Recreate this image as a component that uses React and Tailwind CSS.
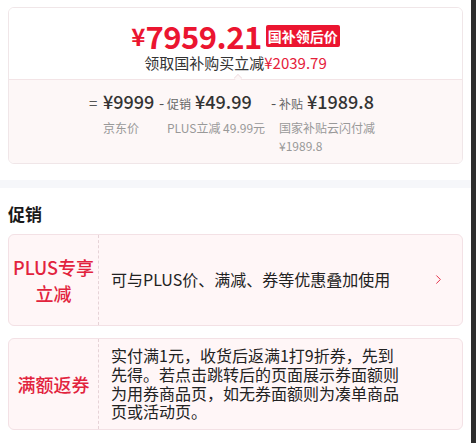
import React from 'react';
import { ChevronRight } from 'lucide-react';

const font = { fontFamily: '"Noto Sans CJK SC", "Noto Sans", sans-serif' };

const PriceCol = ({ sign, tag, amount, label, width, indent }) => (
  <div className={`flex shrink-0 flex-col ${width}`}>
    <div className="flex items-baseline whitespace-nowrap text-[#333]">
      <span className={`${indent} text-[15px] text-[#555]`}>{sign}</span>
      {tag && <span className="mr-[4px] text-[12px] text-[#666]">{tag}</span>}
      <span className="text-[18px] font-medium leading-[26px]">{amount}</span>
    </div>
    <div className={`${indent === 'w-[14px]' ? 'pl-[14px]' : 'pl-[8px]'} pt-[4px] text-[12px] leading-[18px] text-[#999]`}>{label}</div>
  </div>
);

const PromoCard = ({ title, children, arrow }) => (
  <div className="flex h-[92px] rounded-[6px] border border-[#f3e1e5] bg-[#fff6f7]">
    <div className="flex w-[90px] shrink-0 items-center justify-center whitespace-nowrap border-r border-dashed border-[#e6d3d7] text-center text-[18px] font-medium leading-[26px] text-[#e2233d]">
      {title}
    </div>
    <div className="flex flex-1 items-center pl-[12px] pr-[16px]">
      <div className="w-[292px] text-[16px] leading-[18.7px] text-[#222]">{children}</div>
      {arrow && <ChevronRight size={15} strokeWidth={1.5} className="ml-auto text-[#e2233d]" />}
    </div>
  </div>
);

export default function App() {
  return (
    <div className="flex h-[443px] w-[476px] overflow-hidden bg-white" style={font}>
      <div className="w-[471px]">
        <div className="px-[8px] pt-[7px]">
          <div className="overflow-hidden rounded-[6px] border border-[#f0e6e8]">
            <div className="relative flex h-[72px] flex-col items-center border-b border-[#f3e4e6] bg-white pt-[11px]">
              <div className="flex h-[34px] items-center">
                <span className="text-[24px] font-bold leading-[34px] text-[#eb1530]">¥</span>
                <span className="text-[31px] font-bold leading-[34px] tracking-[-0.5px] text-[#eb1530]">7959.21</span>
                <span className="ml-[4px] rounded-[2px] bg-[#eb1530] px-[2px] text-[14px] font-bold leading-[22px] text-white">国补领后价</span>
              </div>
              <div className="text-[15px] leading-[20px] text-[#333]">
                领取国补购买立减<span className="text-[#e5203a]">¥2039.79</span>
              </div>
              <div className="absolute bottom-[-1px] left-[226px] h-[6px] w-[6px] translate-y-[1px] rotate-45 border-l border-t border-[#f3e4e6] bg-[#fdf7f7]" />
            </div>
            <div className="flex justify-center bg-[#fdf7f7] pb-[8px] pr-[6px] pt-[8px]">
              <PriceCol sign="=" indent="w-[14px]" amount="¥9999" label="京东价" width="w-[70px]" />
              <PriceCol sign="-" indent="w-[8px]" tag="促销" amount="¥49.99" label="PLUS立减 49.99元" width="w-[112px]" />
              <PriceCol sign="-" indent="w-[8px]" tag="补贴" amount="¥1989.8" label={<>国家补贴云闪付减<br />¥1989.8</>} width="w-[105px]" />
            </div>
          </div>
        </div>

        <div className="mt-[16px] h-[8px] bg-[#f6f7fa]" />

        <div className="px-[8px]">
          <div className="pt-[14px] text-[17px] font-bold leading-[24px] text-[#1a1a1a]">促销</div>
          <div className="mt-[8px] flex flex-col gap-[12px]">
            <PromoCard title={<>PLUS专享<br />立减</>} arrow>
              <span className="whitespace-nowrap">可与PLUS价、满减、券等优惠叠加使用</span>
            </PromoCard>
            <PromoCard title="满额返券">
              实付满1元，收货后返满1打9折券，先到先得。若点击跳转后的页面展示券面额则为用券商品页，如无券面额则为凑单商品页或活动页。
            </PromoCard>
          </div>
        </div>
      </div>
      <div className="h-full w-[5px] shrink-0 bg-[#2e2e2e]" />
    </div>
  );
}
